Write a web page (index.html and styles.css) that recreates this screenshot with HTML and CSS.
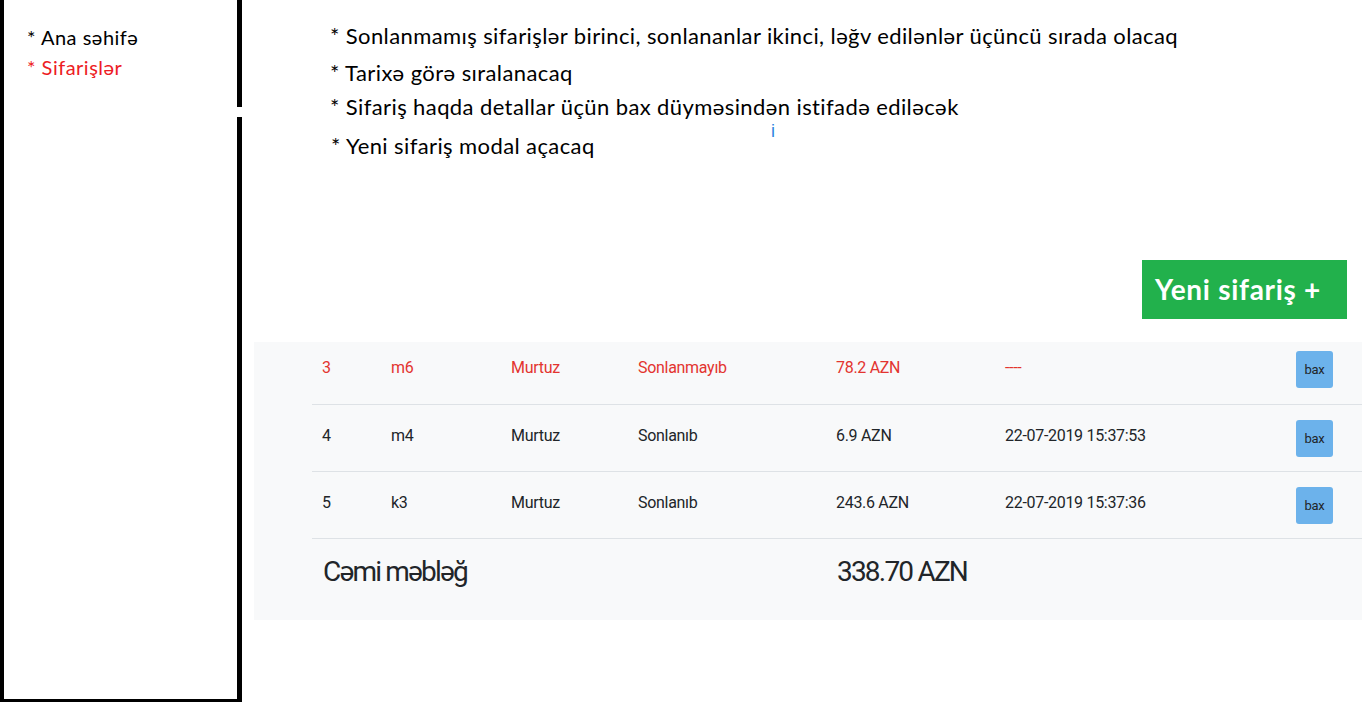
FILE: index.html
```html
<!DOCTYPE html>
<html lang="az">
<head>
<meta charset="utf-8">
<title>Sifarişlər</title>
<link rel="stylesheet" href="styles.css">
</head>
<body>
<div class="page">
  <aside class="sidebar">
    <div class="nav-item">* Ana səhifə</div>
    <div class="nav-item nav-active">* Sifarişlər</div>
  </aside>
  <main class="main">
    <div class="notes">
      <p class="note note-1">* Sonlanmamış sifarişlər birinci, sonlananlar ikinci, ləğv edilənlər üçüncü sırada olacaq</p>
      <p class="note note-2">* Tarixə görə sıralanacaq</p>
      <p class="note note-3">* Sifariş haqda detallar üçün bax düyməsindən istifadə ediləcək</p>
      <p class="note note-4">* Yeni sifariş modal açacaq</p>
      <span class="cursor-mark">i</span>
    </div>
    <div class="actions">
      <div class="btn-new">Yeni sifariş +</div>
    </div>
    <section class="panel">
      <div class="orders">
        <div class="row row-first row-danger">
          <span>3</span><span>m6</span><span>Murtuz</span><span>Sonlanmayıb</span><span>78.2 AZN</span><span>----</span><span class="btn-bax">bax</span>
        </div>
        <div class="row">
          <span>4</span><span>m4</span><span>Murtuz</span><span>Sonlanıb</span><span>6.9 AZN</span><span>22-07-2019 15:37:53</span><span class="btn-bax">bax</span>
        </div>
        <div class="row">
          <span>5</span><span>k3</span><span>Murtuz</span><span>Sonlanıb</span><span>243.6 AZN</span><span>22-07-2019 15:37:36</span><span class="btn-bax">bax</span>
        </div>
        <div class="row-total">
          <span class="total-label">Cəmi məbləğ</span><span class="total-value">338.70 AZN</span>
        </div>
      </div>
    </section>
  </main>
</div>
</body>
</html>
```

FILE: styles.css
```css
* { box-sizing: border-box; }
html, body { margin: 0; padding: 0; background: #fff; }
body { width: 1362px; height: 702px; overflow: hidden; }

.page {
  display: flex;
  height: 702px;
}

.sidebar {
  position: relative;
  width: 242px;
  flex: 0 0 242px;
  height: 702px;
  border-left: 4px solid #000;
  border-right: 5px solid #000;
  border-bottom: 3px solid #000;
  padding: 22px 0 0 23px;
  font-family: "Lato", "Open Sans", sans-serif;
  font-size: 20px;
  letter-spacing: 0.5px;
}
.sidebar::after {
  content: "";
  position: absolute;
  right: -5px;
  top: 107px;
  width: 5px;
  height: 10px;
  background: #fff;
}
.nav-item {
  line-height: 30px;
  color: #000;
}
.nav-active { color: #ed1c24; }

.main {
  flex: 1;
  display: flex;
  flex-direction: column;
}

.notes {
  position: relative;
  padding-left: 88px;
  padding-top: 21px;
  height: 246px;
  font-family: "Lato", "Open Sans", sans-serif;
  font-size: 22px;
  letter-spacing: 0.4px;
  color: #000;
}
.note { margin: 0; line-height: 30px; }
.note-2 { margin-top: 7px; }
.note-3 { margin-top: 4px; }
.note-4 { margin-top: 9px; padding-left: 1px; }
.cursor-mark {
  position: absolute;
  left: 529px;
  top: 124px;
  font-family: "Liberation Sans", sans-serif;
  font-size: 18px;
  font-weight: 400;
  color: #2f86e0;
  line-height: 14px;
  letter-spacing: 0;
}

.actions {
  display: flex;
  justify-content: flex-end;
  padding-right: 15px;
  margin-top: 14px;
}
.btn-new {
  width: 205px;
  height: 59px;
  background: #22b14c;
  color: #fff;
  font-family: "Lato", "Open Sans", sans-serif;
  font-weight: 700;
  font-size: 28px;
  letter-spacing: 0.7px;
  line-height: 59px;
  padding-left: 13px;
}

.panel {
  margin-top: 23px;
  margin-left: 12px;
  height: 278px;
  background: #f8f9fa;
  padding-left: 58px;
}

.orders {
  font-family: "Roboto", sans-serif;
  font-size: 16px;
  color: #212529;
}

.row {
  display: grid;
  grid-template-columns: 69px 120px 127px 198px 169px 291px 37px;
  align-items: center;
  padding: 15px 29px 14px 10px;
  height: 67px;
  border-bottom: 1px solid #dee2e6;
  letter-spacing: -0.3px;
}
.row > span:not(.btn-bax) { margin-bottom: 4px; }
.row-first { height: 63px; padding-top: 8px; padding-bottom: 16px; }
.row-first > span:not(.btn-bax) { margin-bottom: 4px; }
.row:not(.row-first) > span:not(.btn-bax) { margin-bottom: 6px; }
.row-danger { color: #e3342f; }

.btn-bax {
  width: 37px;
  height: 37px;
  background: #6cb2eb;
  border-radius: 3px;
  color: #212529;
  font-size: 13px;
  display: flex;
  align-items: center;
  justify-content: center;
  letter-spacing: -0.3px;
}

.row-total {
  display: grid;
  grid-template-columns: 514px 300px;
  padding: 18px 0 0 11px;
  font-size: 28px;
  line-height: 30px;
  letter-spacing: -1.8px;
  color: #212529;
}
```
